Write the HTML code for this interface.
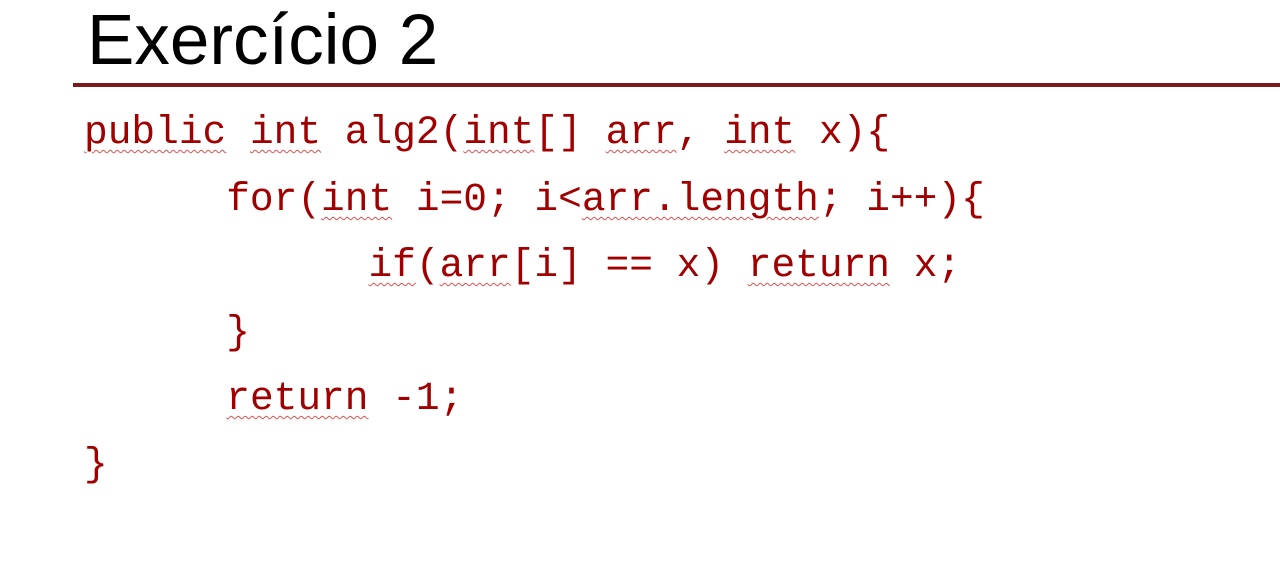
<!DOCTYPE html>
<html><head><style>
body{margin:0;width:1280px;height:572px;background:#fff;overflow:hidden;position:relative;}
.t{position:absolute;left:87px;top:0px;font:71px "Liberation Sans",sans-serif;color:#000;white-space:nowrap;}
.hr{position:absolute;left:73px;top:83px;width:1207px;height:4px;background:#7b1a1e;}
.c{position:absolute;left:84px;font:39.5px "Liberation Mono",monospace;color:#a00000;white-space:pre;line-height:1;}
u{text-decoration:underline wavy #e05050;text-decoration-thickness:1px;text-underline-offset:6px;}
</style></head><body>
<div class="t">Exercício 2</div>
<div class="hr"></div>
<div class="c" style="top:113px"><u>public</u> <u>int</u> alg2(<u>int</u>[] <u>arr</u>, <u>int</u> x){</div>
<div class="c" style="top:180px">      for(<u>int</u> i=0; i&lt;<u>arr.length</u>; i++){</div>
<div class="c" style="top:246px">            <u>if</u>(<u>arr</u>[i] == x) <u>return</u> x;</div>
<div class="c" style="top:313px">      }</div>
<div class="c" style="top:379px">      <u>return</u> -1;</div>
<div class="c" style="top:445px">}</div>
</body></html>
